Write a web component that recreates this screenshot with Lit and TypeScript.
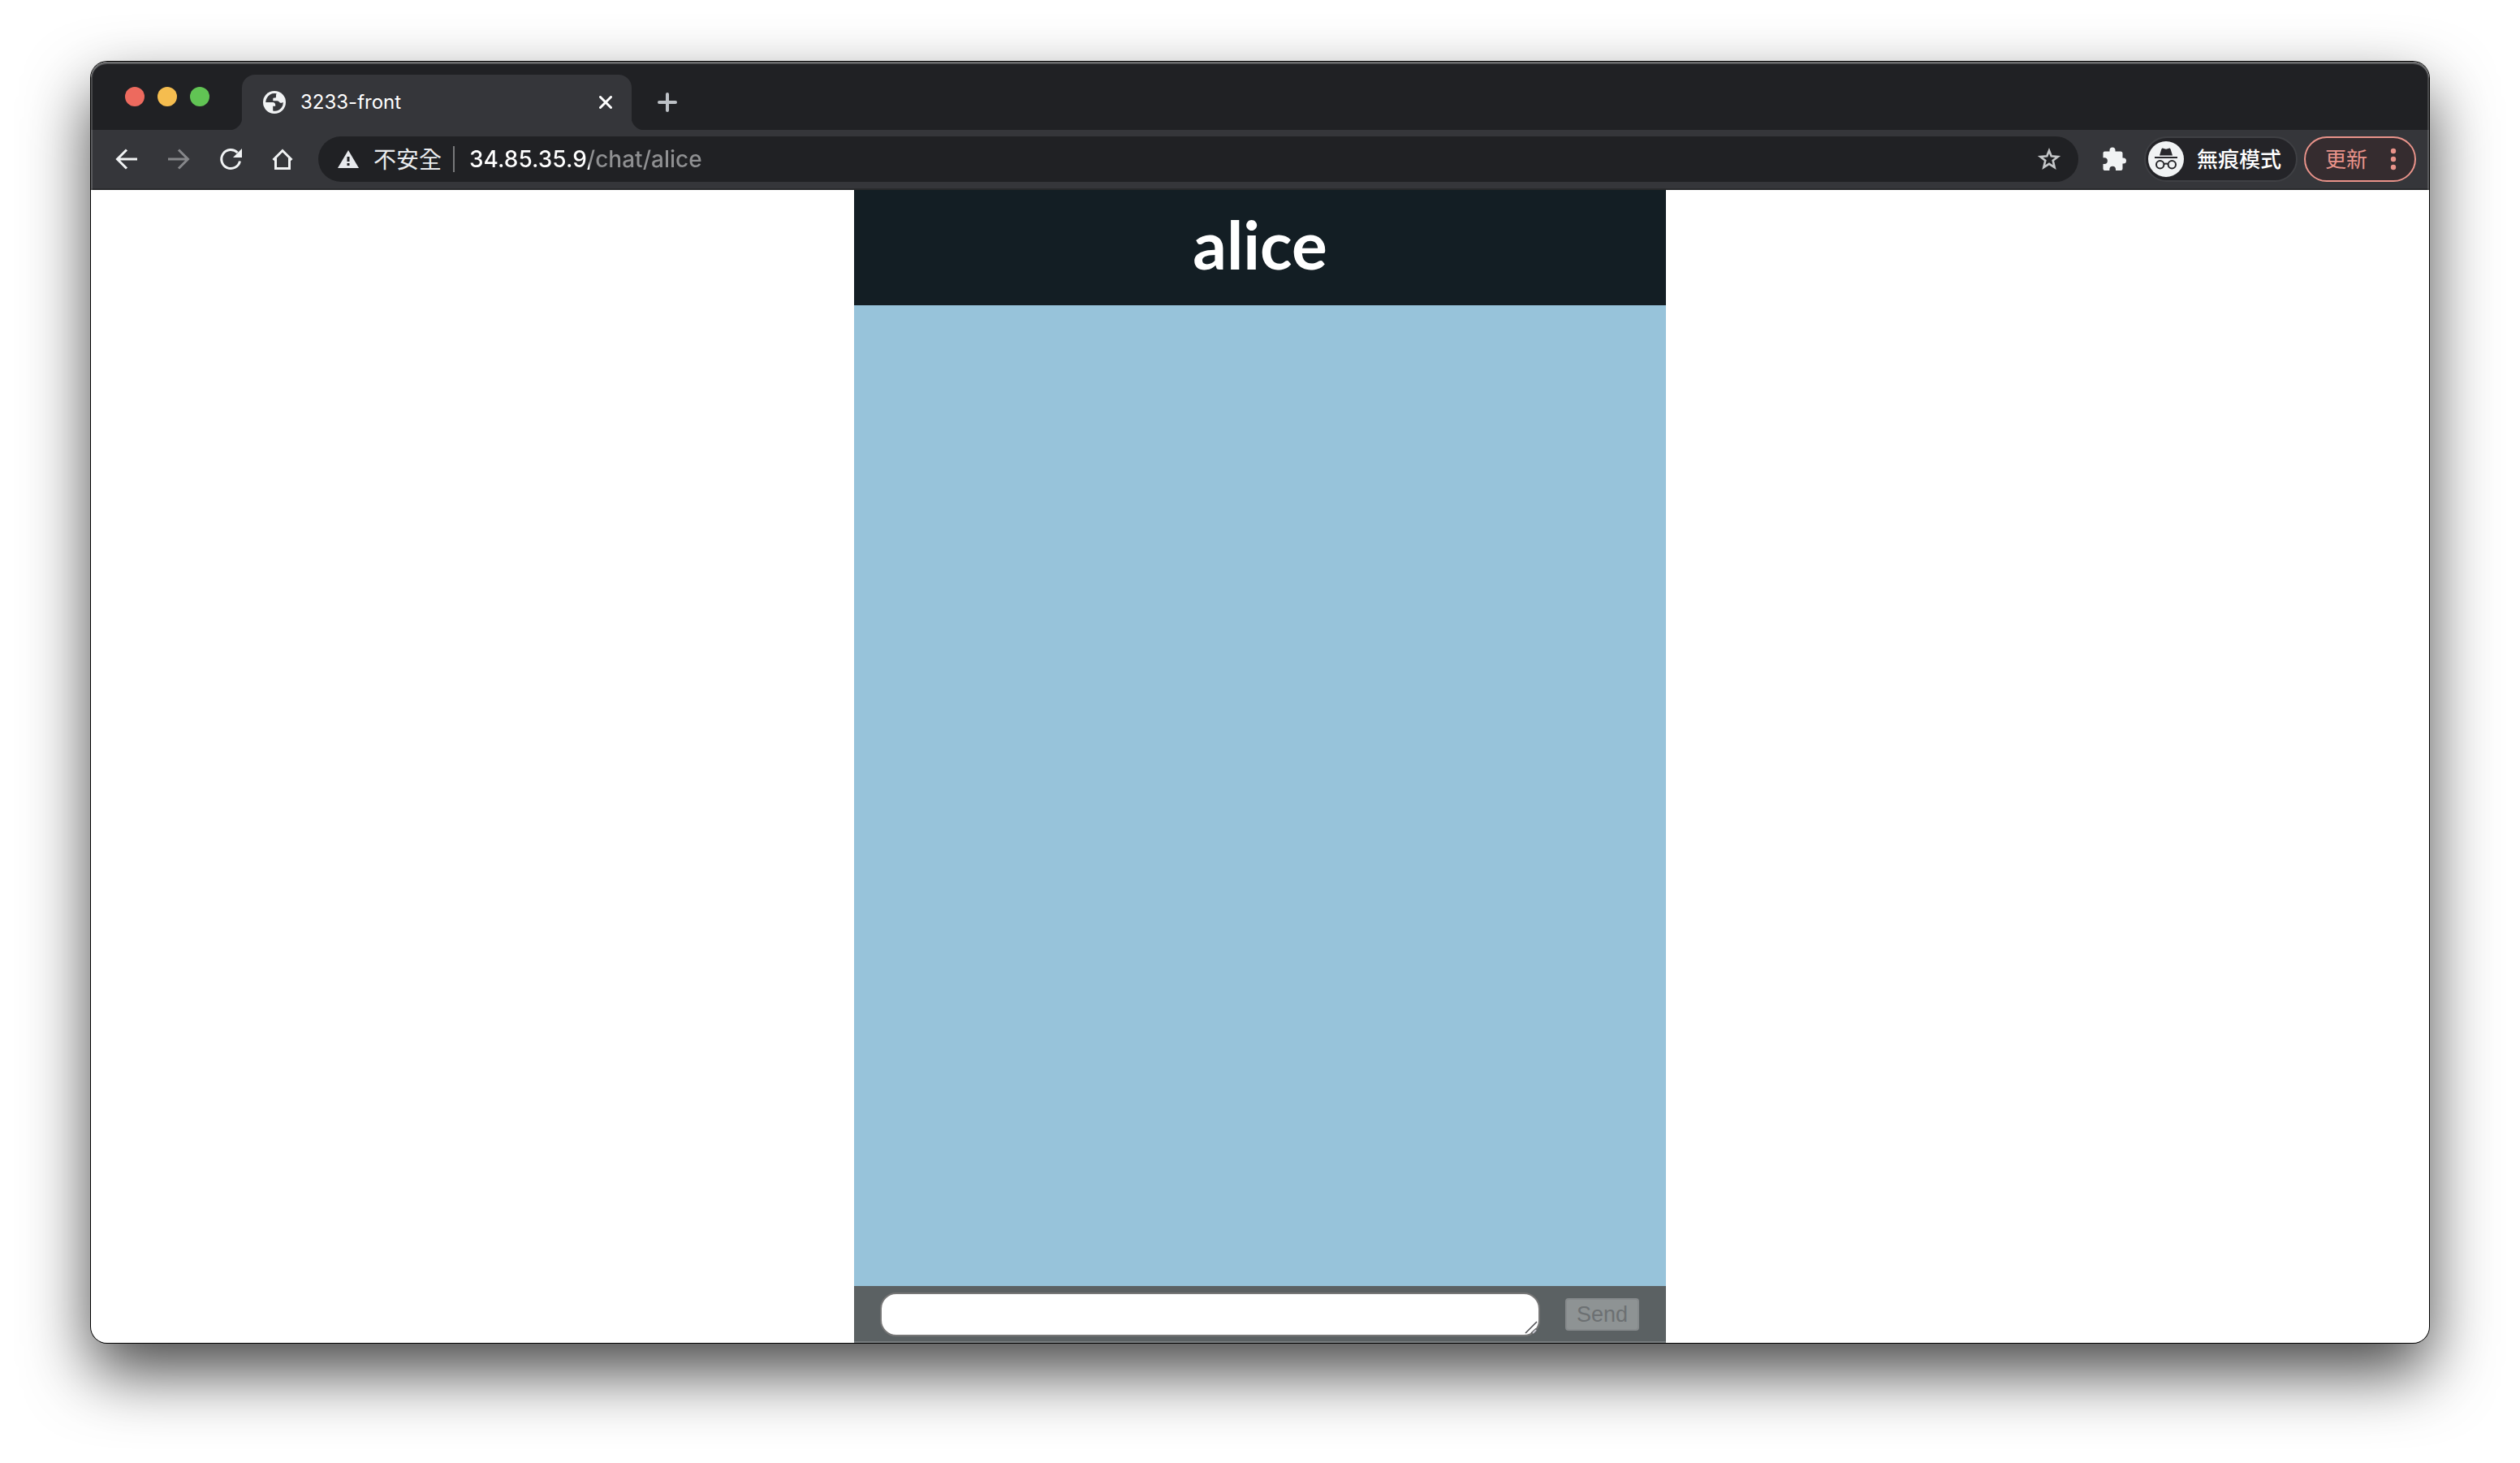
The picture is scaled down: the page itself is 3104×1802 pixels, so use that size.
import { LitElement, html, css, svg } from "lit";
import { customElement, property, state } from "lit/decorators.js";

const uiFont = css`Inter, "Noto Sans CJK TC", "Liberation Sans", sans-serif`;

const icons = {
  globe: svg`<svg width="28" height="28" viewBox="0 0 28 28" aria-hidden="true">
    <circle cx="14" cy="14" r="14" fill="#f1f3f4"/>
    <path d="M16.800 3.300Q8.500 2 4.700 8.700Q3.300 11 3.200 14H12Q15.200 14.300 15.200 17.300V18.700H12.200V24.500Q18.500 25.800 22.600 20.800Q24.900 17.800 24.900 14Q22.600 15.400 20.500 14.200Q19.200 12.300 17.500 12.300H12.300V9.500Q12.400 8.600 13.600 8.500H15Q16 8.400 16 7.200V5.300Q16 4 16.800 3.300Z" fill="#35363a"/>
  </svg>`,
  close: svg`<svg width="16" height="16" viewBox="0 0 16 16" aria-hidden="true">
    <path d="M1.500 1.500L14.500 14.500M14.500 1.500L1.500 14.500" stroke="#fff" stroke-width="3" stroke-linecap="round"/></svg>`,
  plus: svg`<svg width="24" height="24" viewBox="0 0 24 24" aria-hidden="true">
    <path d="M12 2V22M2 12H22" stroke="#bdc1c6" stroke-width="4" stroke-linecap="round"/></svg>`,
  back: svg`<svg width="32" height="32" viewBox="0 0 32 32" aria-hidden="true">
    <path d="M29 16H5M16 4.500L4.500 16L16 27.500" fill="none" stroke="#f1f3f4" stroke-width="3"/></svg>`,
  forward: svg`<svg width="32" height="32" viewBox="0 0 32 32" aria-hidden="true">
    <path d="M3 16H27M16 4.500L27.500 16L16 27.500" fill="none" stroke="#86878a" stroke-width="3"/></svg>`,
  reload: svg`<svg width="32" height="32" viewBox="0 0 32 32" aria-hidden="true">
    <path d="M27.500 18.500A11.500 11.500 0 1 1 24.500 8" fill="none" stroke="#f1f3f4" stroke-width="3"/>
    <path d="M30 3V14H19Z" fill="#f1f3f4"/></svg>`,
  home: svg`<svg width="32" height="32" viewBox="0 0 32 32" aria-hidden="true">
    <path d="M4.500 17L16 5.500L27.500 17M7.500 15V27.500H24.500V15" fill="none" stroke="#f1f3f4" stroke-width="3"/></svg>`,
  warning: svg`<svg width="26" height="22" viewBox="0 0 26 22" aria-hidden="true">
    <path d="M13 0L26 22H0Z" fill="#e8eaed"/><path d="M11.500 8H14.500V14H11.500ZM11.500 16H14.500V19H11.500Z" fill="#202124"/></svg>`,
  star: svg`<svg width="30" height="30" viewBox="0 0 30 30" aria-hidden="true">
    <path d="M15 4.500L17.700 11.200L25.800 11.900L19.700 16.700L21.700 25.200L15 20.800L8.300 25.200L10.300 16.700L4.200 11.900L12.300 11.200Z" fill="none" stroke="#c4c6c8" stroke-width="2.600"/></svg>`,
  puzzle: svg`<svg width="30" height="30" viewBox="0 0 30 30" aria-hidden="true">
    <path d="M2.500 5.500H8.500V4A3.500 3.500 0 0 1 15.500 4V5.500H22Q24.500 5.500 24.500 8V13.500H25.500A3.500 3.500 0 0 1 25.500 20.500H24.500V26.500Q24.500 29 22 29H16V27.500A3.800 3.800 0 0 0 8.400 27.500V29H2.500Q0.500 29 0.500 27V21H2A3.900 3.900 0 0 0 2 13.200H0.500V7.500Q0.500 5.500 2.500 5.500Z" fill="#f1f3f4"/></svg>`,
  incognito: svg`<svg width="44" height="44" viewBox="0 0 44 44" aria-hidden="true">
    <circle cx="22" cy="22" r="22" fill="#f1f3f4"/>
    <path d="M14 17.500L16.300 10Q17 8.300 18.500 8.700L22 9.700L25.500 8.700Q27 8.300 27.700 10L30 17.500Z" fill="#27272b"/>
    <path d="M8 20H36" stroke="#27272b" stroke-width="2"/>
    <path d="M19.300 28.200Q22 27 24.700 28.200" fill="none" stroke="#27272b" stroke-width="2"/>
    <circle cx="14.700" cy="28.700" r="4.700" fill="none" stroke="#27272b" stroke-width="2"/>
    <circle cx="29.300" cy="28.700" r="4.700" fill="none" stroke="#27272b" stroke-width="2"/></svg>`,
  dots: svg`<svg width="8" height="28" viewBox="0 0 8 28" aria-hidden="true" fill="#e9938a">
    <circle cx="4" cy="4" r="3.200"/><circle cx="4" cy="14" r="3.200"/><circle cx="4" cy="24" r="3.200"/></svg>`,
  grip: svg`<svg width="16" height="16" viewBox="0 0 16 16" aria-hidden="true">
    <path d="M1 15L15 1M8 15L14 9.500" stroke="#4c4c50" stroke-width="1.500"/><path d="M10 15L14 11" stroke="#c8c8d0" stroke-width="2"/></svg>`,
};

@customElement("tab-strip")
export class TabStrip extends LitElement {
  @property() label = "";

  static styles = css`
    :host { display: flex; height: 84px; background: #202124; font-family: ${uiFont}; }
    button { border: 0; padding: 0; background: none; display: flex; }
    .lights { display: flex; gap: 16px; padding: 31px 40px 0 42px; }
    .light { width: 24px; height: 24px; border-radius: 50%; }
    .red { background: #ed6a5e; }
    .yellow { background: #f5bd4f; }
    .green { background: #61c454; }
    .tab {
      position: relative; box-sizing: border-box; width: 480px; height: 68px; margin-top: 16px;
      padding: 0 24px 0 26px; display: flex; align-items: center; gap: 18px;
      background: #35363a; border-radius: 16px 16px 0 0;
    }
    .tab::before, .tab::after { content: ""; position: absolute; bottom: 0; width: 16px; height: 16px; }
    .tab::before { right: 100%; background: radial-gradient(circle at 0 0, #202124 16px, #35363a 17px); }
    .tab::after { left: 100%; background: radial-gradient(circle at 100% 0, #202124 16px, #35363a 17px); }
    .label { flex: 1; color: #fff; font-size: 24px; line-height: 32px; }
    .add { margin: 38px 0 0 32px; align-self: flex-start; }
  `;

  render() {
    return html`
      <div class="lights">
        <button class="light red" aria-label="Close window"></button>
        <button class="light yellow" aria-label="Minimize window"></button>
        <button class="light green" aria-label="Zoom window"></button>
      </div>
      <div class="tab">
        ${icons.globe}<span class="label">${this.label}</span>
        <button aria-label="Close tab">${icons.close}</button>
      </div>
      <button class="add" aria-label="New tab">${icons.plus}</button>
    `;
  }
}

@customElement("tool-bar")
export class ToolBar extends LitElement {
  @property() url = "";

  static styles = css`
    :host {
      display: flex; align-items: center; box-sizing: border-box; height: 74px;
      padding: 0 16px 0 28px; background: #35363a; border-bottom: 2px solid #28292b;
      font-family: ${uiFont};
    }
    button { border: 0; padding: 0; background: none; display: flex; align-items: center; font: inherit; }
    .nav { display: flex; gap: 32px; margin-right: 28px; }
    .omnibox {
      flex: 1; min-width: 0; height: 56px; border-radius: 28px; background: #202124;
      box-sizing: border-box; padding: 0 21px 0 24px; display: flex; align-items: center;
    }
    .caption { padding-top: 2px; }
    .security { gap: 18px; color: #e8eaed; font-size: 28px; line-height: 40px; }
    .divider { width: 2px; height: 32px; margin: 0 18px 0 14px; background: #77787a; }
    .url {
      flex: 1; min-width: 0; height: 40px; border: 0; padding: 0; outline: 0;
      font-family: inherit; font-size: 28px; font-weight: 500; color: transparent;
      background: linear-gradient(90deg, #fff 148px, #8f9092 148px);
      -webkit-background-clip: text; background-clip: text;
    }
    .puzzle { margin: 0 21px 0 30px; }
    .profile, .update { box-sizing: border-box; white-space: nowrap; font-size: 26px; line-height: 36px; }
    .profile {
      height: 56px; margin-right: 8px; padding: 0 18px 0 3px; gap: 16px; color: #fff;
      border: 2px solid #3f4044; border-radius: 28px; background: #242428; font-weight: 500;
    }
    .update {
      height: 56px; padding: 0 22px 0 24px; gap: 28px; color: #e9938a;
      border: 2px solid #e9938a; border-radius: 28px; background: #352c2f;
    }
  `;

  render() {
    return html`
      <div class="nav">
        <button aria-label="Back">${icons.back}</button>
        <button aria-label="Forward" disabled>${icons.forward}</button>
        <button aria-label="Reload">${icons.reload}</button>
        <button aria-label="Home">${icons.home}</button>
      </div>
      <div class="omnibox">
        <button class="security">${icons.warning}<span class="caption">不安全</span></button>
        <span class="divider"></span>
        <input class="url" type="text" aria-label="Address" .value=${this.url} />
        <button aria-label="Bookmark">${icons.star}</button>
      </div>
      <button class="puzzle" aria-label="Extensions">${icons.puzzle}</button>
      <button class="profile">${icons.incognito}<span class="caption">無痕模式</span></button>
      <button class="update"><span class="caption">更新</span>${icons.dots}</button>
    `;
  }
}

@customElement("chat-room")
export class ChatRoom extends LitElement {
  @property() name = "";
  @state() private draft = "";

  static styles = css`
    :host {
      display: flex; flex-direction: column; width: 100%; max-width: 1000px; margin: 0 auto;
      background: #97c3da;
    }
    header { display: flex; justify-content: center; background: #131e24; padding: 16px 0 26px; }
    h1 { margin: 0; color: #fff; font: bold 82px/100px Lato, "Open Sans", sans-serif; }
    .messages { flex: 1; }
    form { display: flex; align-items: center; padding: 8px 33px 8px 32px; gap: 31px; background: #5b6163; }
    .field { position: relative; flex: 1; display: flex; }
    textarea {
      flex: 1; box-sizing: border-box; height: 54px; padding: 8px 16px; resize: none; outline: 0;
      border: 2px solid #767676; border-radius: 20px; background: #fff; overflow: hidden;
      font: 27px/34px "Liberation Sans", sans-serif;
    }
    .grip { position: absolute; right: 3px; bottom: 3px; display: flex; pointer-events: none; }
    .send {
      box-sizing: border-box; height: 40px; padding: 0 12px; border: 2px solid #868a8c; border-radius: 4px;
      background: #8e9394; color: #6c7072; font: 27px/36px "Liberation Sans", sans-serif;
    }
  `;

  render() {
    return html`
      <header><h1>${this.name}</h1></header>
      <div class="messages"></div>
      <form @submit=${(e: Event) => e.preventDefault()}>
        <div class="field">
          <textarea
            aria-label="Message"
            .value=${this.draft}
            @input=${(e: Event) => (this.draft = (e.target as HTMLTextAreaElement).value)}
          ></textarea>
          <span class="grip">${icons.grip}</span>
        </div>
        <button class="send" type="submit" ?disabled=${!this.draft}>Send</button>
      </form>
    `;
  }
}

@customElement("app-root")
export class AppRoot extends LitElement {
  static styles = css`
    :host {
      display: flex; box-sizing: border-box; min-height: 100vh; padding: 76px 112px 148px;
      background: #fff; overflow: hidden;
    }
    .window {
      position: relative; flex: 1; min-width: 0; display: flex; flex-direction: column;
      border-radius: 20px; background: #fff;
      box-shadow: 0 0 0 1px #000, 0 36px 80px rgba(0, 0, 0, 0.72);
    }
    .clip { flex: 1; display: flex; flex-direction: column; overflow: hidden; border-radius: 20px; }
    .edge {
      position: absolute; inset: 0; border-radius: 20px; pointer-events: none;
      box-shadow: inset 0 0 0 2px rgba(255, 255, 255, 0.18), inset 0 3px 0 rgba(255, 255, 255, 0.2);
    }
    chat-room { flex: 1; }
  `;

  render() {
    return html`
      <div class="window">
        <div class="clip">
          <tab-strip label="3233-front"></tab-strip>
          <tool-bar url="34.85.35.9/chat/alice"></tool-bar>
          <chat-room name="alice"></chat-room>
        </div>
        <div class="edge"></div>
      </div>
    `;
  }
}
